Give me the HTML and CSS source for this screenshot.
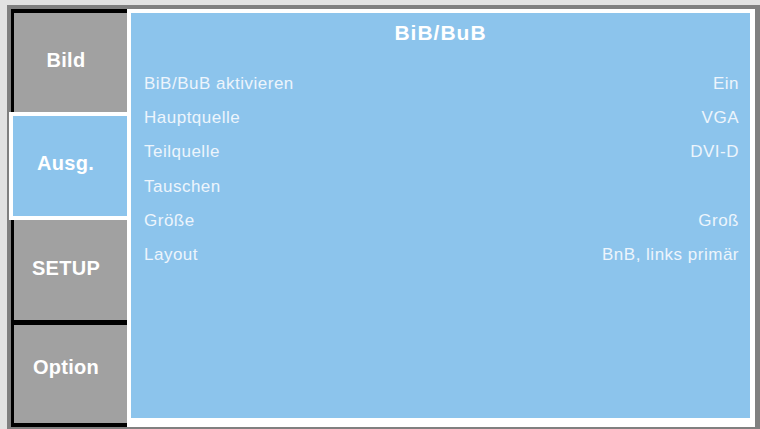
FILE: index.html
```html
<!DOCTYPE html>
<html lang="de">
<head>
<meta charset="utf-8">
<title>BiB/BuB</title>
<link rel="stylesheet" href="styles.css">
</head>
<body>
<div class="frame">
  <nav class="tabs">
    <div class="tab tab-first"><span>Bild</span></div>
    <div class="tab tab-active"><span>Ausg.</span></div>
    <div class="tab"><span>SETUP</span></div>
    <div class="tab tab-last"><span>Option</span></div>
  </nav>
  <main class="panel">
    <h1 class="title">BiB/BuB</h1>
    <ul class="rows">
      <li class="row"><span>BiB/BuB aktivieren</span><span>Ein</span></li>
      <li class="row"><span>Hauptquelle</span><span>VGA</span></li>
      <li class="row"><span>Teilquelle</span><span>DVI-D</span></li>
      <li class="row"><span>Tauschen</span><span></span></li>
      <li class="row"><span>Größe</span><span>Groß</span></li>
      <li class="row"><span>Layout</span><span>BnB, links primär</span></li>
    </ul>
  </main>
</div>
</body>
</html>
```
FILE: styles.css
```css
html, body {
  margin: 0;
  padding: 0;
}
body {
  width: 760px;
  height: 429px;
  background: #e2e2e2;
  font-family: "Liberation Sans", Arial, sans-serif;
  overflow: hidden;
}
.frame {
  box-sizing: border-box;
  margin: 5px 0 0 7px;
  width: 753px;
  height: 424px;
  background: #808080;
  padding: 4px 5px 2px 4px;
  display: flex;
}
.tabs {
  box-sizing: border-box;
  width: 116px;
  flex: none;
  background: #000;
  padding: 4px 0 4px 3px;
  display: flex;
  flex-direction: column;
}
.tab {
  box-sizing: border-box;
  background: #a1a1a1;
  color: #fff;
  font-weight: bold;
  font-size: 20px;
  letter-spacing: 0.3px;
  display: flex;
  align-items: center;
  justify-content: center;
  padding: 0 9px 5px 0;
}
.tab-first { height: 99px; }
.tab-active {
  height: 108px;
  margin-left: -5px;
  background: #8cc4ec;
  border: 4px solid #fff;
  border-right: 0;
  padding: 0 9px 6px 0;
}
.tab:nth-child(3) { height: 100px; padding-bottom: 3px; }
.tab-last {
  height: 98px;
  margin-top: 5px;
  padding-bottom: 14px;
}
.panel {
  box-sizing: border-box;
  flex: 1;
  background: #8cc4ec;
  border-style: solid;
  border-color: #fff;
  border-width: 4px 5px 9px 4px;
  margin: 0;
}
.title {
  margin: 0;
  height: 40px;
  line-height: 40px;
  text-align: center;
  color: #fff;
  font-size: 21px;
  font-weight: bold;
  letter-spacing: 1px;
}
.rows {
  list-style: none;
  margin: 14px 0 0;
  padding: 0 11px 0 13px;
}
.row {
  height: 34.2px;
  display: flex;
  align-items: center;
  justify-content: space-between;
  color: #edf5fc;
  font-size: 17px;
  letter-spacing: 0.5px;
}
```
